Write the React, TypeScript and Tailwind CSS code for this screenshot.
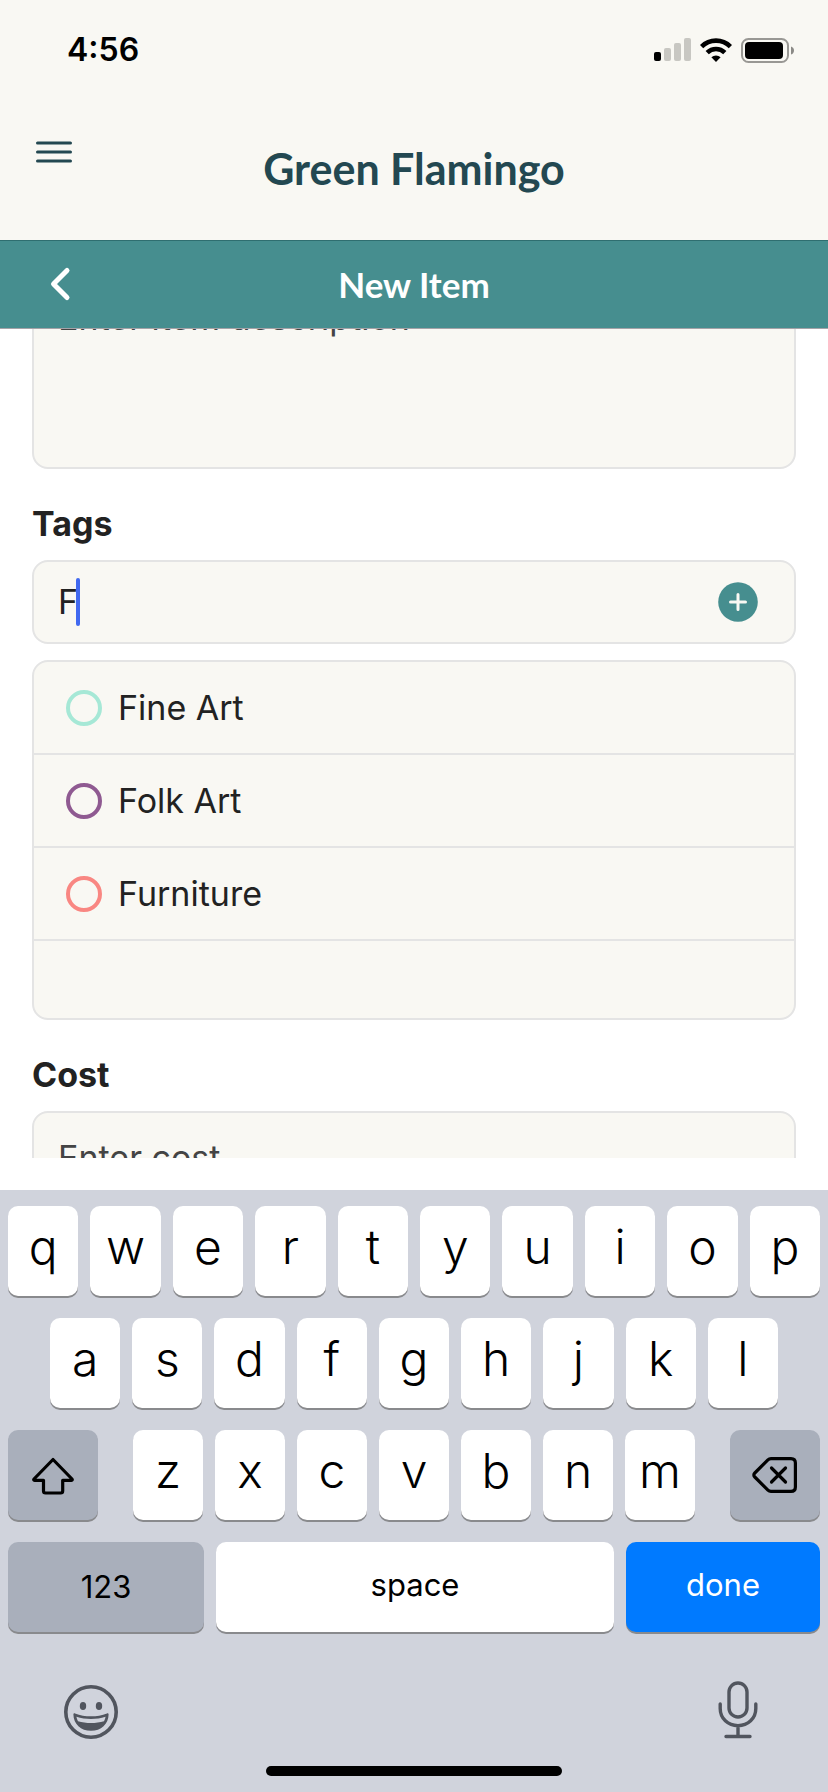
import React from "react";

const TAGS = [
    { name: "Fine Art", ring: "border-[#a6e8d6]" },
    { name: "Folk Art", ring: "border-[#8f5a91]" },
    { name: "Furniture", ring: "border-[#f98782]" },
];

const fieldBox = "w-full rounded-2xl border-2 border-[#e4e4e4] bg-[#f9f8f3]";
const fieldText = "text-[34px] leading-10 text-[#222222] placeholder:text-[#444444] placeholder:opacity-100 outline-none";
const fieldLabel = "block pt-[33px] pb-[15px] text-[34px] leading-[43px] font-bold text-[#222222]";
const keyBase = "flex h-[90px] min-w-0 items-center justify-center rounded-[10px] shadow-[0_2px_0_#898a8d]";

const StatusBar: React.FC = () => (
    <div className="flex h-24 items-center justify-between pt-1 pr-[33px] pl-[67px]">
        <span className="text-[32px] leading-10 font-semibold text-black">4:56</span>
        <div className="flex items-center gap-[9px]">
            <svg width="37" height="24" viewBox="0 0 37 24" aria-hidden="true">
                <rect x="0" y="14" width="7" height="9" rx="2" fill="#000" />
                <rect x="10" y="10" width="7" height="13" rx="2" fill="#c8c7c2" />
                <rect x="20" y="5" width="7" height="18" rx="2" fill="#c8c7c2" />
                <rect x="30" y="0" width="7" height="23" rx="2" fill="#c8c7c2" />
            </svg>
            <svg width="32" height="24" viewBox="0 0 32 24" aria-hidden="true">
                <g fill="none" stroke="#000" strokeWidth="4.6">
                    <path d="M1.6 8.6a20.4 20.4 0 0 1 28.8 0" />
                    <path d="M7.2 14.6a12.6 12.6 0 0 1 17.6 0" />
                </g>
                <path d="M11.4 19.2a6.8 6.8 0 0 1 9.2 0L16 24z" fill="#000" />
            </svg>
            <svg width="54" height="25" viewBox="0 0 54 25" aria-hidden="true">
                <rect x="1" y="1" width="46" height="23" rx="6.5" fill="none" stroke="#999894" strokeWidth="2" />
                <rect x="4" y="4" width="38" height="17" rx="4" fill="#000" />
                <path d="M50 8.4c2 .6 3 2.2 3 4.1s-1 3.5-3 4.1z" fill="#8b8a86" />
            </svg>
        </div>
    </div>
);

const Header: React.FC = () => (
    <header className="bg-[#f9f8f3]">
        <StatusBar />
        <div className="grid h-36 grid-cols-[1fr_auto_1fr] items-center px-9 pt-0.5">
            <button type="button" aria-label="Menu" className="mt-[42px] self-start justify-self-start">
                <svg width="36" height="24" viewBox="0 0 36 24" stroke="#234851" strokeWidth="3" strokeLinecap="round">
                    <path d="M1.5 3h33M1.5 12h33M1.5 21h33" />
                </svg>
            </button>
            <h1 className="font-['Lato',sans-serif] text-[43px] leading-[52px] font-bold text-[#234851]">Green Flamingo</h1>
        </div>
    </header>
);

const TitleBar: React.FC = () => (
    <div className="relative z-10 grid h-[89px] grid-cols-[1fr_auto_1fr] items-center border-t border-b border-t-[#2f6e70] border-b-[#a5a3a8] bg-[#468e8f] px-12 pb-0.5">
        <button type="button" aria-label="Back" className="justify-self-start">
            <svg width="24" height="36" viewBox="0 0 24 36" fill="none" stroke="#fff" strokeWidth="5" strokeLinecap="round" strokeLinejoin="round">
                <path d="M19 4.5L5.5 18L19 31.5" />
            </svg>
        </button>
        <h2 className="font-['Lato',sans-serif] text-[35px] leading-10 font-bold text-white">New Item</h2>
    </div>
);

const ItemForm: React.FC = () => (
    <main className="mb-8 min-h-0 flex-1 overflow-hidden px-8">
        <form className="-mt-14">
            <textarea
                aria-label="Description"
                placeholder="Enter item description"
                className={`${fieldBox} ${fieldText} block h-[196px] resize-none px-6 py-[23px]`}
            />

            <label htmlFor="tags" className={fieldLabel}>
                Tags
            </label>
            <div className={`${fieldBox} flex h-[84px] items-center pr-9 pl-6`}>
                <div className="relative flex-1">
                    <input id="tags" defaultValue="F" className={`${fieldText} w-full bg-transparent`} />
                    <span className="absolute -top-1 left-[18px] h-12 w-1 rounded-full bg-[#4169f0]" />
                </div>
                <button type="button" aria-label="Add tag">
                    <svg width="40" height="40" viewBox="0 0 40 40">
                        <circle cx="20" cy="20" r="19.8" fill="#468e8f" />
                        <path d="M12.5 20h15M20 12.5v15" stroke="#f9f8f3" strokeWidth="3" strokeLinecap="round" />
                    </svg>
                </button>
            </div>

            <ul className={`${fieldBox} mt-4 pb-[77px]`}>
                {TAGS.map((tag) => (
                    <li key={tag.name} className="border-b-2 border-[#e4e4e4]">
                        <button type="button" className="flex h-[91px] w-full items-center gap-4 px-8 text-[34px] leading-10 text-[#222222]">
                            <span className={`size-9 rounded-full border-4 ${tag.ring}`} />
                            {tag.name}
                        </button>
                    </li>
                ))}
            </ul>

            <label htmlFor="cost" className={fieldLabel}>
                Cost
            </label>
            <input id="cost" placeholder="Enter cost" className={`${fieldBox} ${fieldText} h-[92px] px-6`} />
        </form>
    </main>
);

const LetterKeys: React.FC<{ letters: string; className?: string }> = ({ letters, className = "" }) => (
    <div className={`flex flex-1 gap-3 ${className}`}>
        {letters.split("").map((letter) => (
            <button key={letter} type="button" className={`${keyBase} flex-1 bg-white pb-2 text-[48px] leading-none font-[350] text-black`}>
                {letter}
            </button>
        ))}
    </div>
);

const Keyboard: React.FC = () => (
    <section aria-label="Keyboard" className="bg-[#d0d3dc] px-2 pt-4 pb-4 text-black">
        <div className="flex flex-col gap-[22px]">
            <LetterKeys letters="qwertyuiop" />
            <LetterKeys letters="asdfghjkl" className="px-[42px]" />
            <div className="flex">
                <button type="button" aria-label="Shift" className={`${keyBase} w-[90px] bg-[#a9afbb]`}>
                    <svg width="44" height="40" viewBox="0 0 44 40" fill="none" stroke="#000" strokeWidth="3.2" strokeLinejoin="round">
                        <path d="M22 4.500L41 24c.6.7.3 1.3-.5 1.3H31.700V36c0 1.300-.8 2-2 2H14.500c-1.300 0-2-.8-2-2V25.300H3.500c-.8 0-1.100-.6-.5-1.300z" />
                    </svg>
                </button>
                <LetterKeys letters="zxcvbnm" className="px-[35px]" />
                <button type="button" aria-label="Delete" className={`${keyBase} w-[90px] bg-[#a9afbb]`}>
                    <svg width="46" height="38" viewBox="0 0 46 38" fill="none" stroke="#000" strokeWidth="3.2" strokeLinecap="round" strokeLinejoin="round">
                        <path d="M19 2.6h20c2.8 0 4.4 1.6 4.4 4.4v24c0 2.8-1.6 4.4-4.4 4.4H19c-1.3 0-2.2-.4-3.1-1.3L2.8 21c-1.3-1.3-1.3-2.7 0-4L15.9 3.900c.9-.9 1.8-1.300 3.100-1.300z" />
                        <path d="M19.5 12l14 14M33.5 12l-14 14" />
                    </svg>
                </button>
            </div>
            <div className="grid grid-cols-[196fr_398fr_194fr] gap-3 text-[31px]">
                <button type="button" className={`${keyBase} bg-[#a9afbb]`}>123</button>
                <button type="button" className={`${keyBase} bg-white pb-1`}>space</button>
                <button type="button" className={`${keyBase} bg-[#007aff] pb-1 text-white`}>done</button>
            </div>
        </div>

        <div className="mt-12 flex items-center justify-between pr-[62px] pl-[55px] text-[#51555e]">
            <button type="button" aria-label="Emoji">
                <svg width="56" height="60" viewBox="0 0 56 60">
                    <circle cx="28" cy="32" r="25.2" fill="none" stroke="currentColor" strokeWidth="3.6" />
                    <ellipse cx="20" cy="26" rx="3.2" ry="3.9" fill="currentColor" />
                    <ellipse cx="36" cy="26" rx="3.2" ry="3.9" fill="currentColor" />
                    <path d="M10.4 34.4c0-.9.8-1.3 1.6-1 10 3.8 22 3.8 32 0 .8-.3 1.600.1 1.600 1 0 9.200-7.600 16.400-17.600 16.400s-17.600-7.200-17.600-16.400z" fill="currentColor" />
                    <path d="M13.400 36.800c9.400 3 19.800 3 29.200 0-.3 1.700-.8 3.100-1.600 4.500-8 2.400-18 2.400-26 0-.8-1.400-1.300-2.800-1.600-4.500z" fill="#d0d3dc" />
                </svg>
            </button>
            <button type="button" aria-label="Dictate">
                <svg width="40" height="60" viewBox="0 0 40 60" fill="none" stroke="currentColor" strokeWidth="3.4" strokeLinecap="round">
                    <rect x="11" y="3" width="18" height="34" rx="9" />
                    <path d="M2.2 24v4.5c0 10 7.800 17.200 17.800 17.200s17.800-7.200 17.800-17.200V24M20 46v10M8 56.500h24" />
                </svg>
            </button>
        </div>
        <div className="mx-auto mt-[26px] h-[10px] w-[296px] rounded-full bg-black" />
    </section>
);

const App: React.FC = () => {
    return (
        <div className="flex h-screen flex-col overflow-hidden bg-white font-['Inter',sans-serif]">
            <Header />
            <TitleBar />
            <ItemForm />
            <Keyboard />
        </div>
    );
};

export default App;
